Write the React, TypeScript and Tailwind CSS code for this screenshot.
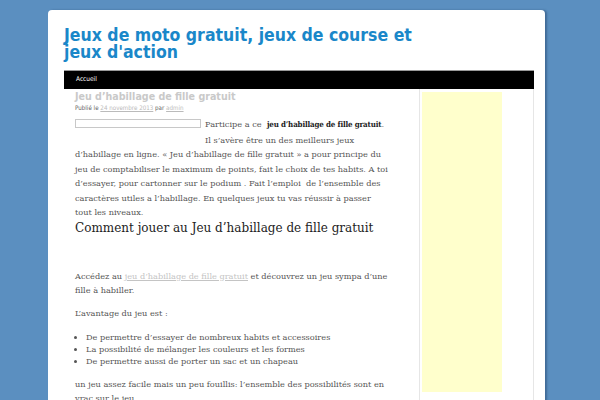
const sans = { fontFamily: '"DejaVu Sans Condensed", "DejaVu Sans", sans-serif' };
const serif = { fontFamily: '"DejaVu Serif", serif' };
const serifBold = { fontFamily: '"DejaVu Serif Condensed", "DejaVu Serif", serif' };

const BULLETS = [
  'De permettre d’essayer de nombreux habits et accessoires',
  'La possibilité de mélanger les couleurs et les formes',
  'De permettre aussi de porter un sac et un chapeau',
];

export default function App() {
  return (
    <div className="h-[400px] overflow-hidden bg-[#5b8fc0] pt-[10px] pl-[48px]">
      <div className="w-[497px] bg-white rounded-t-[4px] shadow-[2px_0_2px_rgba(40,70,110,0.5)] pl-[16px] pr-[11px] pb-[20px]">
        <header className="pt-[17px] pb-[9px]">
          <h1
            className="w-[370px] text-[17.5px] leading-[17px] font-bold text-[#1a87c9]"
            style={sans}
          >
            Jeux de moto gratuit, jeux de course et jeux d'action
          </h1>
        </header>

        <nav className="h-[19px] bg-black border-t border-[#9a9a9a] flex items-center pl-[12px]">
          <span className="text-[6.5px] text-white" style={sans}>Accueil</span>
        </nav>

        <div className="flex">
          <main className="w-[355px] pl-[11px] pr-[28px]">
            <h2
              className="pt-[1px] text-[10.6px] leading-[13px] font-bold text-[#c9c9c9]"
              style={sans}
            >
              Jeu d’habillage de fille gratuit
            </h2>
            <p className="text-[6.2px] leading-[10px] text-[#666]" style={sans}>
              Publié le <a className="underline text-[#bbb]">24 novembre 2013</a> par{' '}
              <a className="underline text-[#bbb]">admin</a>
            </p>

            <div className="mt-[4px] text-[8.2px] leading-[14.5px] text-[#555]" style={serif}>
              <div className="float-left w-[126px] h-[9px] mt-[2px] mr-[4px] mb-[15px] border border-[#c8c8c8]" />
              <p>
                Participe a ce&nbsp;{' '}
                <strong className="text-[#222] text-[7.9px] tracking-[-0.15px]" style={serifBold}>
                  jeu d’habillage de fille gratuit
                </strong>
                . Il s’avère être un des meilleurs jeux d’habillage en ligne. « Jeu d’habillage de fille
                gratuit » a pour principe du jeu de comptabiliser le maximum de points, fait le choix de
                tes habits. A toi d’essayer, pour cartonner sur le podium . Fait l’emploi &nbsp;de
                l’ensemble des caractères utiles a l’habillage. En quelques jeux tu vas réussir à passer
                <br />
                tout les niveaux.
              </p>

              <h3 className="text-[12px] leading-[12px] text-[#222] mt-[2px]">
                Comment jouer au Jeu d’habillage de fille gratuit
              </h3>

              <p className="mt-[35px]">
                Accédez au <a className="underline text-[#c4c4c4]">jeu d’habillage de fille gratuit</a> et
                découvrez un jeu sympa d’une fille à habiller.
              </p>
              <p className="mt-[8.5px]">L’avantage du jeu est :</p>
              <ul className="mt-[10px] list-disc pl-[11px] leading-[12px]">
                {BULLETS.map(b => (
                  <li key={b}>{b}</li>
                ))}
              </ul>
              <p className="mt-[10px]">
                un jeu assez facile mais un peu fouillis: l’ensemble des possibilités sont en vrac sur le
                jeu
              </p>
            </div>
          </main>

          <aside className="w-[115px] h-[320px] border-x border-[#e6e6e6] pl-[2px] pt-[3px]">
            <div className="w-[80px] h-[300px] bg-[#ffffcc]" />
          </aside>
        </div>
      </div>
    </div>
  );
}
